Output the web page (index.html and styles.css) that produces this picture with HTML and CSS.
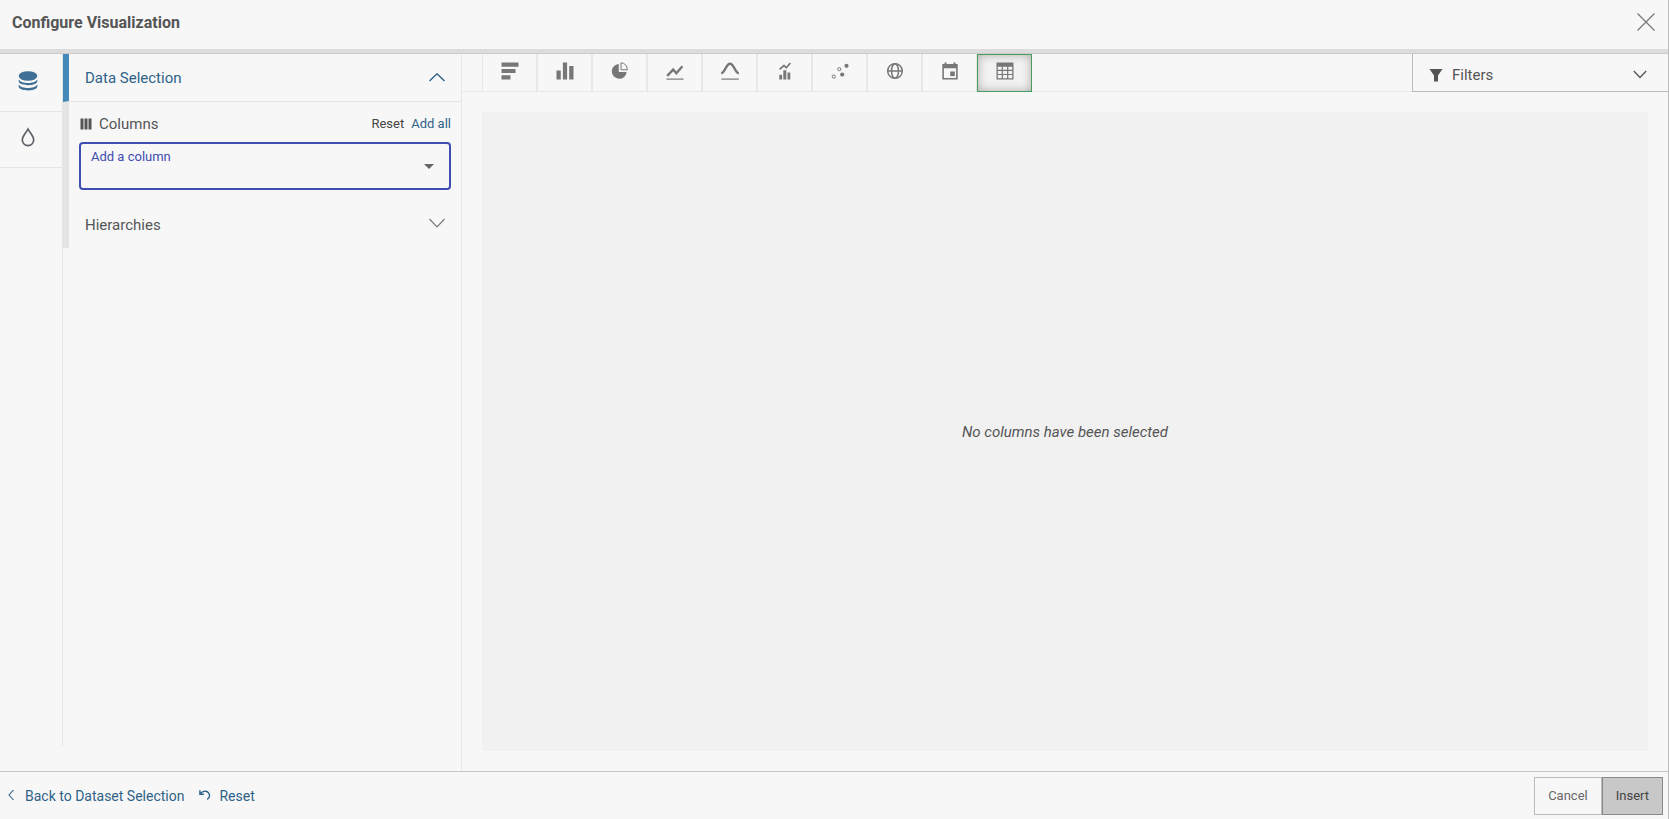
FILE: index.html
```html
<!DOCTYPE html>
<html lang="en">
<head>
<meta charset="utf-8">
<title>Configure Visualization</title>
<link rel="stylesheet" href="styles.css">
</head>
<body>
<div class="dialog">
  <header class="dialog-header">
    <h1 class="dialog-title">Configure Visualization</h1>
    <button class="close-button" type="button" aria-label="Close">
      <svg width="18" height="18" viewBox="0 0 18 18" fill="none" stroke="#777" stroke-width="1.2"><path d="M0.5 0.5l17 17M17.500 0.500l-17 17"/></svg>
    </button>
  </header>

  <div class="dialog-body">
    <nav class="rail">
      <button class="rail-item" type="button" aria-label="Data">
        <svg width="20" height="20" viewBox="0 0 20 20" fill="#3f6f94"><ellipse cx="10" cy="5" rx="9.300" ry="4.800"/><path d="M.6 8.400c1.500 2.500 5.400 3.500 9.400 3.500s7.900-1 9.400-3.500v1.700c0 2.400-4.200 4.200-9.400 4.200S.6 12.500.6 10.100z"/><path d="M.6 13.400c1.500 2.500 5.400 3.500 9.400 3.500s7.900-1 9.400-3.500v1.900c0 2.400-4.200 4.200-9.400 4.200S.6 17.700.6 15.300z"/></svg>
      </button>
      <button class="rail-item" type="button" aria-label="Style">
        <svg width="14" height="20" viewBox="0 0 14 20" fill="none" stroke="#5a5f63" stroke-width="1.600"><path d="M7 2C5.300 5.600 1.300 8.900 1.300 13a5.700 5.600 0 0 0 11.400 0C12.700 8.900 8.700 5.600 7 2z"/></svg>
      </button>
    </nav>

    <aside class="settings">
      <section class="panel panel-open">
        <button class="panel-header" type="button" aria-expanded="true">
          <span>Data Selection</span>
          <svg width="18" height="10" viewBox="0 0 18 10" fill="none" stroke="#2f6288" stroke-width="1.400"><path d="M1.500 8L9 .8 16.500 8"/></svg>
        </button>
      </section>
      <section class="panel">
        <div class="columns-block">
          <div class="columns-heading">
            <svg width="12" height="12" viewBox="0 0 12 12" fill="#555"><path d="M.5.500h3v11h-3zM4.500.500h3v11h-3zM8.500.500h3v11h-3z"/></svg>
            <span class="columns-title">Columns</span>
            <a class="action action-reset" href="#">Reset</a>
            <a class="action" href="#">Add all</a>
          </div>
          <div class="field">
            <label class="field-label" for="column">Add a column</label>
            <select class="field-select" id="column"><option value=""></option></select>
            <svg class="field-arrow" width="10" height="5" viewBox="0 0 10 5" fill="#666"><path d="M0 0h10L5 5z"/></svg>
          </div>
        </div>
        <button class="panel-header" type="button" aria-expanded="false">
          <span>Hierarchies</span>
          <svg class="chevron-down" width="18" height="10" viewBox="0 0 18 10" fill="none" stroke="#777" stroke-width="1.200"><path d="M1.500 1L9 8.800 16.500 1"/></svg>
        </button>
      </section>
    </aside>

    <main class="workspace">
      <div class="toolbar">
        <div class="chart-types">
          <button class="chart-type" type="button" aria-label="Bar chart"><svg class="icon" viewBox="0 0 18 18"><path d="M.5.500h17v4.200H.5zM.5 6.900h14v4.200H.5zM.5 13.300h9v4.200h-9z"/></svg></button>
          <button class="chart-type" type="button" aria-label="Column chart"><svg class="icon" viewBox="0 0 18 18"><path d="M.5 8.500h4.300v9H.5zM6.900.500h4.200v17H6.900zM13.200 4h4.300v13.500h-4.300z"/></svg></button>
          <button class="chart-type" type="button" aria-label="Pie chart"><svg class="icon" viewBox="0 0 18 18"><path d="M7.800 2v8h7.800A7.400 7.400 0 1 1 7.800 2z"/><path d="M10 .8a6.500 6.500 0 0 1 6.300 7H10z" fill="none" stroke="#777" stroke-width="1"/></svg></button>
          <button class="chart-type" type="button" aria-label="Line chart"><svg class="icon" viewBox="0 0 18 18"><path d="M1.200 13.800l6-6.200 3.200 3.600 6-6.900" fill="none" stroke="#777" stroke-width="2.400"/><path d="M.5 16.500h17v1.200H.5z"/></svg></button>
          <button class="chart-type" type="button" aria-label="Area chart"><svg class="icon" viewBox="0 0 18 18"><path d="M.3 11.500C4.500 10 5 1.700 9 1.700s4.500 8.300 8.700 9.800" fill="none" stroke="#777" stroke-width="2.400"/><path d="M.3 16.500h17.400v1.200H.3z"/></svg></button>
          <button class="chart-type" type="button" aria-label="Combination chart"><svg class="icon" viewBox="0 0 18 18"><path d="M3.300 12.800h2.800v4.700H3.300zM7.300 8.300h3v9.200h-3zM11.500 10.500h2.800v7h-2.800z"/><path d="M3.600 7.400L8 3.500l2.200 2.300L14.400 1" fill="none" stroke="#777" stroke-width="1.700"/></svg></button>
          <button class="chart-type" type="button" aria-label="Scatter chart"><svg class="icon" viewBox="0 0 18 18"><circle cx="15.500" cy="3.800" r="2.100"/><circle cx="11.200" cy="12.600" r="2.100"/><g fill="none" stroke="#777"><circle cx="8.300" cy="7.200" r="1.600"/><circle cx="2.800" cy="14.600" r="1.600"/></g></svg></button>
          <button class="chart-type" type="button" aria-label="Map"><svg class="icon" viewBox="0 0 18 18"><g fill="none" stroke="#777" stroke-width="1.500"><circle cx="9" cy="9" r="7.300"/><ellipse cx="9" cy="9" rx="3.500" ry="7.300"/><path d="M1.700 9h14.600"/></g></svg></button>
          <button class="chart-type" type="button" aria-label="Calendar"><svg class="icon" viewBox="0 0 18 18"><path fill-rule="evenodd" d="M3.500.500h2V2h7V.500h2V2h2.200v15.500H1.300V2h2.200zM2.900 6.200v9.700h12.200V6.200z"/><path d="M9.200 9.500h4.600v4.600H9.200z"/></svg></button>
          <button class="chart-type chart-type-active" type="button" aria-label="Table" aria-pressed="true"><svg class="icon" viewBox="0 0 18 18"><path fill-rule="evenodd" d="M.5.500h17v17H.5zM1.800 4.700v3h3.900v-3zm5.100 0v3h4.200v-3zm5.400 0v3h3.900v-3zM1.800 8.900v3h3.900v-3zm5.100 0v3h4.200v-3zm5.400 0v3h3.900v-3zM1.800 13.100v3.200h3.900v-3.200zm5.100 0v3.200h4.200v-3.200zm5.400 0v3.200h3.900v-3.200z"/></svg></button>
        </div>
        <button class="filters" type="button">
          <svg width="14" height="14" viewBox="0 0 14 14" fill="#555"><path d="M.5 1h13L9 7.500v6H5v-6z"/></svg>
          <span class="filters-label">Filters</span>
          <svg width="14" height="9" viewBox="0 0 14 9" fill="none" stroke="#555" stroke-width="1.300"><path d="M.8 1L7 7.500 13.200 1"/></svg>
        </button>
      </div>
      <div class="preview"><p class="preview-message">No columns have been selected</p></div>
    </main>
  </div>

  <footer class="dialog-footer">
    <a class="footer-link" href="#">
      <svg width="10" height="12" viewBox="0 0 10 12" fill="none" stroke="#2f6288" stroke-width="1.100"><path d="M6.500 0L2 5l4.500 5"/></svg>
      Back to Dataset Selection
    </a>
    <a class="footer-link" href="#">
      <svg width="12" height="12" viewBox="0 0 12 12" fill="none" stroke="#2f6288" stroke-width="1.400"><path d="M.9.300v4h4M1 4C3 1.300 7 .3 9.200 2.500c2.300 2.300 1.600 5.100-1 6.800"/></svg>
      Reset
    </a>
    <div class="footer-buttons">
      <button class="button" type="button">Cancel</button>
      <button class="button button-insert" type="button">Insert</button>
    </div>
  </footer>
</div>
</body>
</html>
```
FILE: styles.css
```css
* {
  box-sizing: border-box;
}

body {
  margin: 0;
  background: #f7f7f7;
  color: #555;
  font-family: Roboto, "Liberation Sans", sans-serif;
  font-size: 15px;
  line-height: 20px;
}

button {
  margin: 0;
  padding: 0;
  border: 0;
  background: none;
  color: inherit;
  font: inherit;
}

a {
  color: #2f6288;
  text-decoration: none;
}

svg {
  display: block;
  flex: none;
}

.dialog {
  display: flex;
  flex-direction: column;
  min-height: 100vh;
  border-right: 1px solid #bbb;
}

.dialog-header {
  display: flex;
  align-items: center;
  justify-content: space-between;
  padding: 10px 13px 17px 12px;
  border-bottom: 1px solid #ccc;
  box-shadow: inset 0 -4px #dcdcdc;
}

.dialog-title {
  margin: 0;
  font-size: 16px;
  font-weight: 700;
  line-height: 26px;
}

.close-button {
  padding-bottom: 2px;
}

.dialog-body {
  display: flex;
  flex: 1;
}

.rail {
  display: flex;
  flex-direction: column;
  width: 63px;
  margin-bottom: 25px;
  border-right: 1px solid #e4e4e4;
}

.rail-item {
  display: flex;
  align-items: center;
  justify-content: center;
  height: 56px;
  padding: 0 7px 5px 0;
  border-bottom: 1px solid #e4e4e4;
}

.rail-item:first-child {
  height: 58px;
  padding-bottom: 3px;
}

.settings {
  width: 399px;
  border-right: 1px solid #e8e8e8;
}

.panel {
  border-left: 6px solid #e4e4e4;
}

.panel-open {
  border-left-color: #4389b9;
  border-bottom: 1px solid #e4e4e4;
  color: #2f6288;
}

.panel-header {
  display: flex;
  align-items: center;
  justify-content: space-between;
  width: 100%;
  height: 47px;
  padding: 0 15px 0 16px;
}

.chevron-down {
  margin-bottom: 4px;
}

.columns-block {
  padding: 12px 10px 11px;
}

.columns-heading {
  display: flex;
  align-items: center;
  gap: 7px;
  padding-left: 1px;
  margin-bottom: 8px;
}

.columns-title {
  flex: 1;
}

.action {
  font-size: 13px;
}

.action-reset {
  color: #444;
}

.field {
  position: relative;
}

.field-label {
  position: absolute;
  top: 5px;
  left: 12px;
  color: #3f4cb0;
  font-size: 13px;
}

.field-select {
  display: block;
  width: 100%;
  height: 48px;
  padding: 20px 12px 4px;
  appearance: none;
  border: 2px solid #3f4cb0;
  border-radius: 4px;
  background: transparent;
  font: inherit;
}

.field-arrow {
  position: absolute;
  top: 22px;
  right: 17px;
  pointer-events: none;
}

.workspace {
  display: flex;
  flex: 1;
  flex-direction: column;
}

.toolbar {
  display: flex;
  justify-content: space-between;
  padding-left: 20px;
  border-bottom: 1px solid #e8e8e8;
}

.chart-types {
  display: flex;
  margin-bottom: -1px;
  border-left: 1px solid #e8e8e8;
}

.chart-type {
  display: flex;
  align-items: center;
  justify-content: center;
  width: 55px;
  height: 38px;
  padding-bottom: 4px;
  border-right: 2px solid #e6e7e9;
}

.chart-type-active {
  margin-left: -1px;
  border: 1px solid #4b9d5d;
  background: #f2f2f2;
  box-shadow: inset 0 0 10px #aaa;
}

.icon {
  width: 18px;
  height: 18px;
  fill: #777;
}

.filters {
  display: flex;
  align-items: center;
  width: 256px;
  margin-bottom: -1px;
  padding: 4px 21px 0 16px;
  border: 1px solid #bbb;
  border-width: 0 0 1px 1px;
}

.filters-label {
  flex: 1;
  padding-left: 9px;
  text-align: left;
}

.preview {
  display: flex;
  flex: 1;
  align-items: center;
  justify-content: center;
  margin: 20px;
  background: #f1f1f1;
}

.preview-message {
  margin: 0;
  font-style: italic;
}

.dialog-footer {
  display: flex;
  align-items: center;
  gap: 15px;
  padding: 5px 5px 4px 7px;
  border-top: 1px solid #c6c6c6;
}

.footer-link {
  display: flex;
  align-items: center;
  gap: 8px;
  font-size: 14px;
}

.footer-buttons {
  display: flex;
  margin-left: auto;
}

.button {
  height: 38px;
  padding: 0 13px;
  border: 1px solid #bbb;
  color: #666;
  font-size: 13px;
}

.button-insert {
  border-color: #888;
  background: #c8c8c8;
  color: #444;
}
```
